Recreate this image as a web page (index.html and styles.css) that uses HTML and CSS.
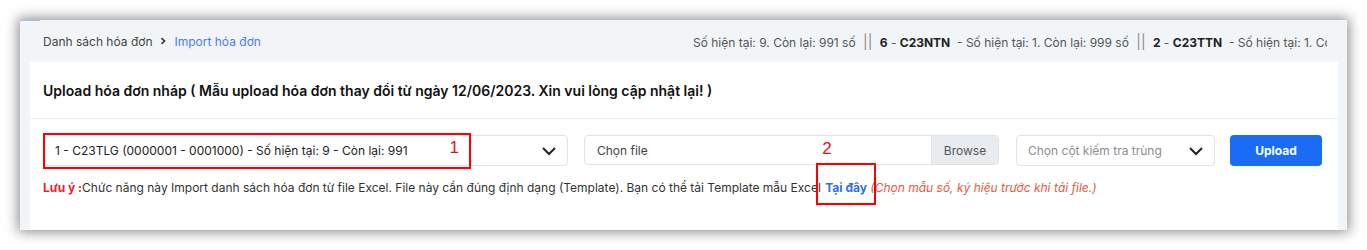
FILE: index.html
```html
<!DOCTYPE html>
<html lang="vi">
<head>
  <meta charset="utf-8"/>
  <link rel="stylesheet" href="styles.css">
  <title>Import hóa đơn</title>
</head>
<body>
  <div class="frame">
    <div class="top-accent"></div>
    <div class="page-header">
      <div class="breadcrumb">
        <span class="crumb">Danh sách hóa đơn</span>
        <svg class="crumb-sep" width="8" height="8" viewBox="0 0 8 8"><path d="M2.5 1.2 L5.5 4 L2.5 6.8" fill="none" stroke="#333" stroke-width="1.6"/></svg>
        <span class="crumb active">Import hóa đơn</span>
      </div>
      <div class="series-status">
        Số hiện tại: 9. Còn lại: 991 số <span class="bar">||</span> <b>6</b> - <b>C23NTN</b> &nbsp;- Số hiện tại: 1. Còn lại: 999 số <span class="bar">||</span> <b>2</b> - <b>C23TTN</b> &nbsp;- Số hiện tại: 1. Còn lại: 999 số
      </div>
    </div>

    <div class="card">
      <div class="card-title">Upload hóa đơn nháp ( Mẫu upload hóa đơn thay đổi từ ngày 12/06/2023. Xin vui lòng cập nhật lại! )</div>
      <div class="card-body">
        <div class="form-row">
          <div class="select series-select">
            <span class="select-text">1 - C23TLG (0000001 - 0001000) - Số hiện tại: 9 - Còn lại: 991</span>
            <svg class="chevron" width="16" height="10" viewBox="0 0 16 10"><path d="M2 2 L8 8 L14 2" fill="none" stroke="#222" stroke-width="2"/></svg>
            <div class="mark mark-1"><span class="mark-num">1</span></div>
          </div>
          <div class="file-input">
            <span class="file-label">Chọn file</span>
            <span class="file-browse">Browse</span>
          </div>
          <div class="select check-select">
            <span class="select-text placeholder">Chọn cột kiếm tra trùng</span>
            <svg class="chevron" width="16" height="10" viewBox="0 0 16 10"><path d="M2 2 L8 8 L14 2" fill="none" stroke="#222" stroke-width="2"/></svg>
          </div>
          <button class="btn-upload">Upload</button>
        </div>
        <div class="note">
          <span class="note-label">Lưu ý :</span>Chức năng này Import danh sách hóa đơn từ file Excel. File này cần đúng định dạng (Template). Bạn có thể tải Template mẫu Excel
          <span class="note-link">Tại đây<span class="mark mark-2"><span class="mark-num">2</span></span></span>
          <span class="note-hint">(Chọn mẫu số, ký hiệu trước khi tải file.)</span>
        </div>
      </div>
    </div>
  </div>
</body>
</html>
```

FILE: styles.css
```css
body {
  margin: 0;
  background: #fff;
  font-family: Inter, "Noto Sans", sans-serif;
  color: #333;
}

.frame {
  position: relative;
  margin: 20px;
  width: 1327px;
  height: 210px;
  background: #f2f5f8;
  box-shadow: 0 0 12px 2px rgba(0, 0, 0, .45);
  display: flex;
  flex-direction: column;
}

.top-accent {
  position: absolute;
  top: 0;
  left: 0;
  width: 20px;
  height: 1px;
  background: #9ec3f5;
}

.page-header {
  height: 42px;
  display: flex;
  align-items: center;
  padding: 0 20px 0 23px;
  font-size: 12px;
}

.breadcrumb {
  display: flex;
  align-items: center;
  gap: 7px;
  white-space: nowrap;
}

.crumb {
  color: #444;
}

.crumb.active {
  color: #4a7cf0;
}

.series-status {
  margin-left: auto;
  width: 634px;
  flex-shrink: 0;
  overflow: hidden;
  white-space: nowrap;
  color: #555;
  font-size: 12px;
}

.series-status b {
  color: #222;
  font-weight: 700;
}

.series-status .bar {
  color: #888;
  margin: 0 4px;
  font-size: 14px;
}

.card {
  flex: 1;
  margin: 0 9px 0 10px;
  background: #fff;
  border-radius: 3px 3px 0 0;
}

.card-title {
  height: 56px;
  padding: 0 13px;
  display: flex;
  align-items: center;
  border-bottom: 1px solid #eceef1;
  font-size: 14px;
  font-weight: 600;
  color: #111;
}

.card-body {
  padding: 16px 13px 0;
}

.form-row {
  display: flex;
  align-items: flex-start;
  gap: 16px;
}

.select {
  position: relative;
  height: 31px;
  border: 1px solid #dfe2e6;
  border-radius: 4px;
  display: flex;
  align-items: center;
  padding: 0 10px 0 11px;
  box-sizing: border-box;
  font-size: 12px;
}

.series-select {
  width: 525px;
}

.check-select {
  width: 199px;
  margin-left: 1px;
}

.select-text {
  flex: 1;
  white-space: nowrap;
  color: #222;
}

.select-text.placeholder {
  color: #8a8d91;
}

.chevron {
  flex-shrink: 0;
}

.file-input {
  width: 415px;
  height: 30px;
  box-sizing: border-box;
  border: 1px solid #dfe2e6;
  border-radius: 4px;
  display: flex;
  font-size: 12px;
  overflow: hidden;
}

.file-label {
  flex: 1;
  display: flex;
  align-items: center;
  padding-left: 12px;
  color: #444;
}

.file-browse {
  width: 66px;
  display: flex;
  align-items: center;
  justify-content: center;
  background: #e9ecef;
  border-left: 1px solid #dfe2e6;
  color: #555;
}

.btn-upload {
  width: 92px;
  height: 31px;
  margin-left: -1px;
  border: none;
  border-radius: 4px;
  background: #1a6cf5;
  color: #fff;
  font-family: inherit;
  font-size: 12px;
  font-weight: 700;
}

.note {
  margin-top: 14px;
  font-size: 12px;
  color: #333;
  white-space: nowrap;
}

.note-label {
  color: #e8242b;
  font-weight: 700;
}

.note-link {
  position: relative;
  color: #2f6fe6;
  font-weight: 700;
  margin-left: 1px;
}

.note-hint {
  color: #e35a3c;
  font-style: italic;
}

/* red annotation boxes drawn over the screenshot */
.mark {
  position: absolute;
  border: 2px solid #f00;
  box-sizing: border-box;
}

.mark-1 {
  left: -1px;
  top: -3px;
  width: 428px;
  height: 36px;
}

.mark-1 .mark-num {
  position: absolute;
  right: 10px;
  top: 3px;
  color: #e01010;
  font-family: "Liberation Sans", sans-serif;
  font-size: 17px;
}

.mark-2 {
  left: -9px;
  top: -17px;
  width: 60px;
  height: 42px;
}

.mark-2 .mark-num {
  position: absolute;
  left: 4px;
  top: -26px;
  color: #e01010;
  font-family: "Liberation Sans", sans-serif;
  font-size: 17px;
  font-weight: 400;
}
```
